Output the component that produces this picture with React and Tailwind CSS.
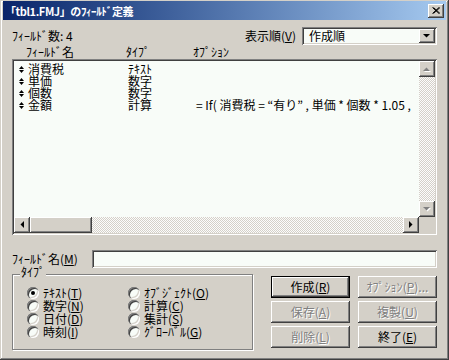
import React from 'react'

const raised = 'shadow-[inset_-1px_-1px_#404040,inset_1px_1px_#fff,inset_-2px_-2px_#808080,inset_2px_2px_#d4d0c8]'
const sunken = 'shadow-[inset_1px_1px_#808080,inset_-1px_-1px_#fff,inset_2px_2px_#404040,inset_-2px_-2px_#d4d0c8]'
const checker = 'bg-[repeating-conic-gradient(#d4d0c8_0_25%,#fcfcfc_0_50%)] bg-[length:2px_2px]'
const dim = 'text-[#808080] [text-shadow:1px_1px_0_#fff]'

function Arrow({ dir, disabled }) {
  const p = {
    up: '0,4 3.5,0.5 7,4',
    down: '0,0 7,0 3.5,3.5',
    left: '4,0 4,7 0.5,3.5',
    right: '0,0 0,7 3.5,3.5',
  }[dir]
  const w = dir === 'up' || dir === 'down' ? 7 : 4
  const h = w === 7 ? 4 : 7
  return (
    <svg width={w + 1} height={h + 1} viewBox={`0 0 ${w + 1} ${h + 1}`}>
      {disabled && <polygon points={p} fill="#fff" transform="translate(1 1)" />}
      <polygon points={p} fill={disabled ? '#808080' : '#000'} />
    </svg>
  )
}

function ScrollBtn({ dir, disabled }) {
  return (
    <div className={`w-4 h-4 shrink-0 flex items-center justify-center bg-[#d4d0c8] ${raised}`}>
      <Arrow dir={dir} disabled={disabled} />
    </div>
  )
}

// "Label(K)" with the access key underlined
function Mn({ text, k }) {
  return (
    <span>
      {text}(<span className="underline underline-offset-[1px]">{k}</span>)
    </span>
  )
}

function Radio({ label, k, checked }) {
  return (
    <div className="flex items-center h-[13px]">
      <div className="w-[12px] h-[12px] rounded-full bg-[#f8fcf8] shadow-[inset_1px_1px_0_#808080,inset_2px_2px_0_#404040,inset_-1px_-1px_0_#fff,inset_-2px_-2px_0_#d4d0c8] flex items-center justify-center">
        {checked && <div className="w-[4px] h-[4px] rounded-full bg-black" />}
      </div>
      <span className="ml-[4px]"><Mn text={label} k={k} /></span>
    </div>
  )
}

function Btn({ label, k, suffix, disabled, isDefault }) {
  const face = (
    <div className={`flex-1 flex items-center justify-center bg-[#d4d0c8] ${raised} ${disabled ? dim : 'text-black'}`}>
      <Mn text={label} k={k} />{suffix}
    </div>
  )
  if (isDefault) {
    return <div className="h-[22px] flex border border-black">{face}</div>
  }
  return <div className="h-[22px] flex">{face}</div>
}

const fields = [
  ['消費税', 'ﾃｷｽﾄ', ''],
  ['単価', '数字', ''],
  ['個数', '数字', ''],
  ['金額', '計算', '= If( 消費税 = “有り” , 単価 * 個数 * 1.05 ,'],
]

const types = [
  ['ﾃｷｽﾄ', 'T', true],
  ['ｵﾌﾞｼﾞｪｸﾄ', 'O'],
  ['数字', 'N'],
  ['計算', 'C'],
  ['日付', 'D'],
  ['集計', 'S'],
  ['時刻', 'I'],
  ['ｸﾞﾛｰﾊﾞﾙ', 'G'],
]

export default function App() {
  return (
    <div className="w-[449px] h-[360px] overflow-hidden bg-[#d4d0c8] text-[12px] leading-[12px] text-black [font-family:'Noto_Sans_CJK_JP',sans-serif] shadow-[inset_-1px_-1px_#404040,inset_1px_1px_#d4d0c8,inset_-2px_-2px_#808080,inset_2px_2px_#fff]">
      {/* title bar */}
      <div className="mx-[3px] mt-[1px] h-[19px] flex items-center bg-linear-to-r from-[#0a246a] to-[#a6caf0]">
        <span className="ml-[2px] text-white font-bold text-[11px] tracking-[-0.4px]">「tbl1.FMJ」のﾌｨｰﾙﾄﾞ定義</span>
        <div className={`ml-auto mr-[2px] w-[16px] h-[14px] flex items-center justify-center bg-[#d4d0c8] ${raised}`}>
          <svg width="8" height="7" viewBox="0 0 8 7">
            <path d="M0.5 0.5 L7 6.5 M1.5 0.5 L8 6.5 M7 0.5 L0.5 6.5 M8 0.5 L1.5 6.5" stroke="#000" strokeWidth="1" />
          </svg>
        </div>
      </div>

      <div className="px-[12px]">
        {/* count + sort order */}
        <div className="mt-[7px] h-[18px] flex items-center">
          <span>ﾌｨｰﾙﾄﾞ数: 4</span>
          <span className="ml-auto mr-[6px]"><Mn text="表示順" k="V" /></span>
          <div className={`w-[135px] h-[18px] flex items-center bg-[#f8fcf8] ${sunken}`}>
            <span className="ml-[7px]">作成順</span>
            <div className="ml-auto mr-[2px] flex">
              <div className={`w-[16px] h-[14px] flex items-center justify-center bg-[#d4d0c8] ${raised}`}>
                <Arrow dir="down" />
              </div>
            </div>
          </div>
        </div>

        {/* column headers */}
        <div className="h-[13px] flex items-center pl-[14px]">
          <span className="w-[100px]">ﾌｨｰﾙﾄﾞ名</span>
          <span className="w-[67px]">ﾀｲﾌﾟ</span>
          <span>ｵﾌﾟｼｮﾝ</span>
        </div>

        {/* field list */}
        <div className={`mt-[1px] h-[176px] p-[2px] flex flex-col bg-[#f8fcf8] ${sunken}`}>
          <div className="flex-1 flex min-h-0">
            <div className="flex-1 pt-[2px] pl-[5px] overflow-hidden whitespace-nowrap">
              {fields.map(([name, type, opt]) => (
                <div key={name} className="h-[12px] flex items-center">
                  <svg width="9" height="7" viewBox="0 0 9 7" className="shrink-0">
                    <polygon points="0,3 2.5,0 5,3" fill="#000" />
                    <polygon points="0,4 5,4 2.5,7" fill="#000" />
                  </svg>
                  <span className="w-[100px] shrink-0">{name}</span>
                  <span className="w-[68px] shrink-0">{type}</span>
                  <span>{opt}</span>
                </div>
              ))}
            </div>
            <div className="w-4 flex flex-col">
              <ScrollBtn dir="up" disabled />
              <div className={`flex-1 ${checker}`} />
              <ScrollBtn dir="down" disabled />
            </div>
          </div>
          <div className="h-4 flex">
            <ScrollBtn dir="left" />
            <div className={`w-[62px] bg-[#d4d0c8] ${raised}`} />
            <div className={`flex-1 ${checker}`} />
            <ScrollBtn dir="right" />
            <div className="w-4 bg-[#d4d0c8]" />
          </div>
        </div>

        {/* field name */}
        <div className="mt-[15px] h-[18px] flex items-center">
          <span className="w-[80px]"><Mn text="ﾌｨｰﾙﾄﾞ名" k="M" /></span>
          <div className={`flex-1 h-[18px] bg-[#f8fcf8] ${sunken}`} />
        </div>

        {/* type group + buttons */}
        <div className="mt-[6px] flex items-start">
          <div className="relative w-[241px] h-[76px] border border-[#808080] shadow-[1px_1px_0_#fff,inset_1px_1px_0_#fff] pt-[11px] pl-[14px]">
            <span className="absolute left-[7px] top-[-9px] px-[1px] bg-[#d4d0c8]">ﾀｲﾌﾟ</span>
            <div className="grid grid-cols-[101px_auto]">
              {types.map(([label, k, checked]) => (
                <Radio key={k} label={label} k={k} checked={checked} />
              ))}
            </div>
          </div>
          <div className="ml-[18px] mt-[2px] grid grid-cols-[79px_79px] gap-x-[8px] gap-y-[3px]">
            <Btn label="作成" k="R" isDefault />
            <Btn label="ｵﾌﾟｼｮﾝ" k="P" suffix="..." disabled />
            <Btn label="保存" k="A" disabled />
            <Btn label="複製" k="U" disabled />
            <Btn label="削除" k="L" disabled />
            <Btn label="終了" k="E" />
          </div>
        </div>
      </div>
    </div>
  )
}
